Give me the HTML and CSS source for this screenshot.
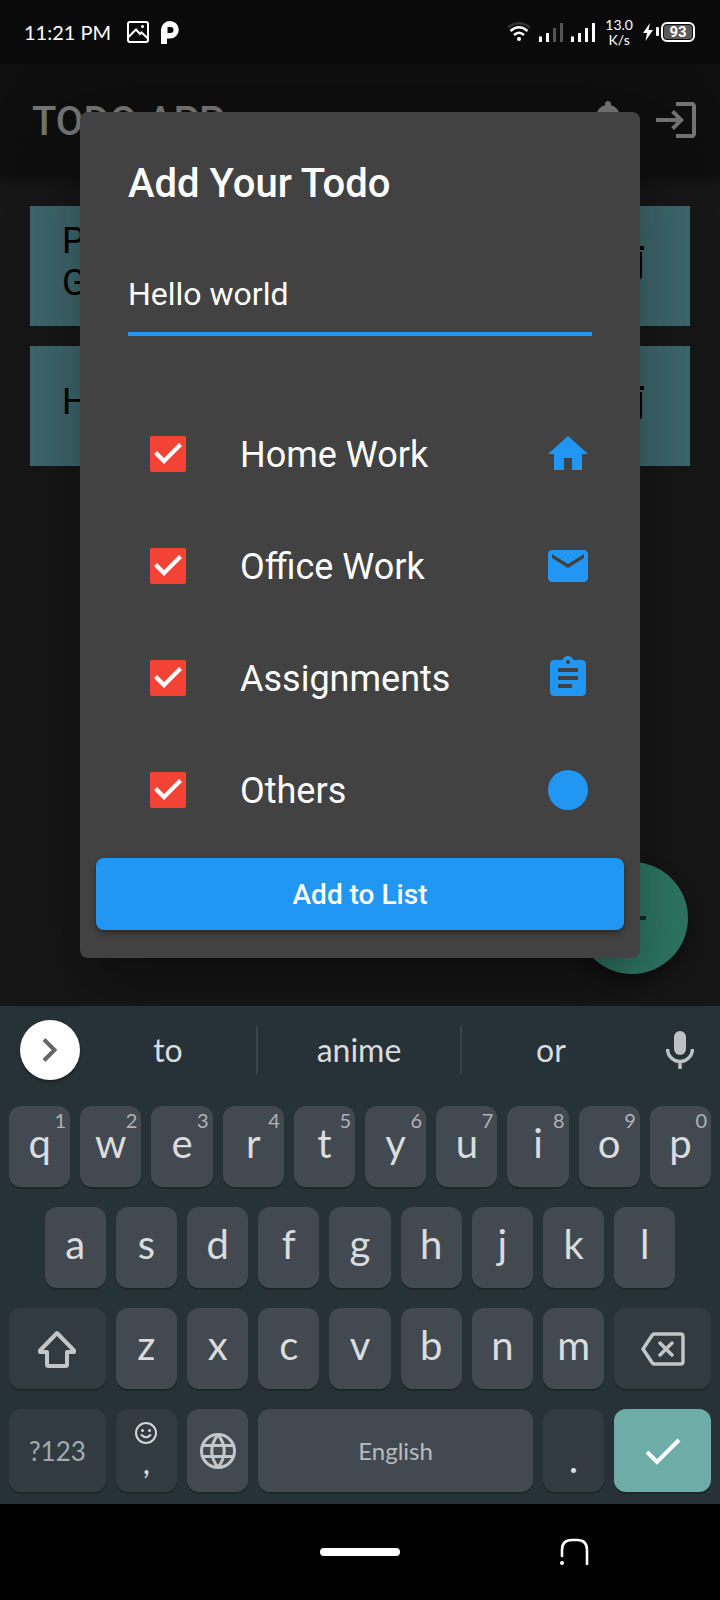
FILE: index.html
```html
<!DOCTYPE html>
<html lang="en">
<head>
<meta charset="utf-8">
<meta name="viewport" content="width=device-width, initial-scale=1">
<title>Todo App</title>
<link rel="stylesheet" href="styles.css">
</head>
<body>
<div class="phone">
  <header class="status">
    <span class="status-time">11:21 PM</span>
    <svg class="status-image" width="22" height="22" viewBox="0 0 22 22" fill="none" stroke="#fff" stroke-width="2"><rect x="1" y="1" width="20" height="20" rx="2"/><path d="M1 16.500L9 8.500L13 13L14.500 11.500L21 17.500"/><circle cx="15.500" cy="5.500" r="1.500" fill="#fff" stroke="none"/></svg>
    <svg class="status-brand" width="18" height="23" viewBox="0 0 18 23"><path fill="#fff" fill-rule="evenodd" d="M0 23V8.500A9 9 0 0 1 9 0A8.800 8.800 0 0 1 9 17.600H6V23ZM6.500 6V12H9.500A3 3 0 0 0 9.500 6Z"/></svg>
    <div class="status-right">
      <svg width="24" height="20" viewBox="0 0 24 20" fill="none" stroke="#fff" stroke-width="2.400"><path stroke="#333" d="M1 5.500Q12-3 23 5.500"/><path d="M3.500 9Q12 1.500 20.500 9M7 13Q12 8.500 17 13"/><circle cx="12" cy="17" r="2" fill="#fff" stroke="none"/></svg>
      <svg width="24" height="20" viewBox="0 0 24 20" fill="#fff"><path d="M0 14.500h3V20H0zM7 11h3v9H7z"/><path fill="#555" d="M14 6h3v14h-3zM21 1h3v19h-3z"/></svg>
      <svg width="24" height="20" viewBox="0 0 24 20" fill="#fff"><path d="M0 14.500h3V20H0zM7 11h3v9H7zM14 6h3v14h-3zM21 1h3v19h-3z"/></svg>
      <span class="status-rate">13.0<br>K/s</span>
      <span class="battery">
        <svg width="16" height="18" viewBox="0 0 16 18" fill="#fff"><path d="M7 0L0 10h4L2.500 18L10 7H5.500z"/><rect x="13" y="4" width="3" height="9" rx="1"/></svg>
        <span class="battery-level">93</span>
      </span>
    </div>
  </header>

  <section class="stage">
    <div class="app">
      <div class="app-bar">
        <h1 class="app-title">TODO APP</h1>
        <button class="icon-button" aria-label="Notifications"><svg width="48" height="48" viewBox="0 0 24 24" fill="currentColor"><path d="M12 22c1.100 0 2-.9 2-2h-4c0 1.100.89 2 2 2zm6-6v-5c0-3.070-1.640-5.640-4.500-6.320V4c0-.83-.67-1.500-1.500-1.500s-1.500.67-1.500 1.500v.68C7.630 5.360 6 7.920 6 11v5l-2 2v1h16v-1l-2-2z"/></svg></button>
        <button class="icon-button" aria-label="Log out"><svg width="48" height="48" viewBox="0 0 24 24" fill="currentColor"><path d="M11 7L9.600 8.400l2.600 2.600H2v2h10.200l-2.600 2.600L11 17l5-5-5-5zm9 12h-8v2h8c1.100 0 2-.9 2-2V5c0-1.100-.9-2-2-2h-8v2h8v14z"/></svg></button>
      </div>
      <div class="todos">
        <article class="todo"><p class="todo-text">P<br>G</p>
          <button class="todo-delete" aria-label="Delete"><svg width="48" height="48" viewBox="0 0 24 24" fill="currentColor"><path d="M6 19c0 1.100.9 2 2 2h8c1.100 0 2-.9 2-2V7H6v12zM8 9h8v10H8V9zm7.500-5l-1-1h-5l-1 1H5v2h14V4z"/></svg></button></article>
        <article class="todo"><p class="todo-text">H</p>
          <button class="todo-delete" aria-label="Delete"><svg width="48" height="48" viewBox="0 0 24 24" fill="currentColor"><path d="M6 19c0 1.100.9 2 2 2h8c1.100 0 2-.9 2-2V7H6v12zM8 9h8v10H8V9zm7.500-5l-1-1h-5l-1 1H5v2h14V4z"/></svg></button></article>
      </div>
      <button class="fab" aria-label="Add todo"><svg width="48" height="48" viewBox="0 0 24 24" fill="currentColor"><path d="M19 13h-6v6h-2v-6H5v-2h6V5h2v6h6v2z"/></svg></button>
    </div>

    <div class="overlay">
      <form class="dialog" role="dialog" aria-labelledby="dialog-title">
        <h2 class="dialog-title" id="dialog-title">Add Your Todo</h2>
        <input class="dialog-input" type="text" value="Hello world" aria-label="Todo">
        <div class="options">
          <div class="option"><input class="check" type="checkbox" id="c1" checked><label class="option-label" for="c1">Home Work</label>
            <svg class="option-icon" width="48" height="48" viewBox="0 0 24 24"><path d="M10 20v-6h4v6h5v-8h3L12 3 2 12h3v8z"/></svg></div>
          <div class="option"><input class="check" type="checkbox" id="c2" checked><label class="option-label" for="c2">Office Work</label>
            <svg class="option-icon" width="48" height="48" viewBox="0 0 24 24"><path d="M20 4H4c-1.100 0-1.990.9-1.990 2L2 18c0 1.100.9 2 2 2h16c1.100 0 2-.9 2-2V6c0-1.100-.9-2-2-2zm0 4l-8 5-8-5V6l8 5 8-5v2z"/></svg></div>
          <div class="option"><input class="check" type="checkbox" id="c3" checked><label class="option-label" for="c3">Assignments</label>
            <svg class="option-icon" width="48" height="48" viewBox="0 0 24 24"><path d="M19 3h-4.180C14.400 1.840 13.300 1 12 1c-1.300 0-2.400.84-2.820 2H5c-1.100 0-2 .9-2 2v14c0 1.100.9 2 2 2h14c1.100 0 2-.9 2-2V5c0-1.100-.9-2-2-2zm-7 0c.55 0 1 .45 1 1s-.45 1-1 1-1-.45-1-1 .45-1 1-1zm2 14H7v-2h7v2zm3-4H7v-2h10v2zm0-4H7V7h10v2z"/></svg></div>
          <div class="option"><input class="check" type="checkbox" id="c4" checked><label class="option-label" for="c4">Others</label>
            <svg class="option-icon" width="48" height="48" viewBox="0 0 24 24"><circle cx="12" cy="12" r="10"/></svg></div>
        </div>
        <button class="submit" type="button">Add to List</button>
      </form>
    </div>
  </section>

  <section class="keyboard" aria-label="Keyboard">
    <div class="suggestions">
      <button class="expand" aria-label="More"><svg width="16" height="24" viewBox="0 0 16 24" fill="none" stroke="#666" stroke-width="4"><path d="M2 1.500L12.500 12L2 22.500"/></svg></button>
      <button class="suggestion">to</button>
      <button class="suggestion">anime</button>
      <button class="suggestion">or</button>
      <button class="mic" aria-label="Voice input"><svg width="28" height="38" viewBox="0 0 28 38"><rect x="8" width="12" height="24" rx="6" fill="#bdc1c5"/><path d="M1.500 18a12.500 12.500 0 0 0 25 0M14 30v8" fill="none" stroke="#bdc1c5" stroke-width="3.500"/></svg></button>
    </div>
    <div class="keys">
      <button class="key key-letter">q<span class="hint">1</span></button><button class="key key-letter">w<span class="hint">2</span></button><button class="key key-letter">e<span class="hint">3</span></button><button class="key key-letter">r<span class="hint">4</span></button><button class="key key-letter">t<span class="hint">5</span></button><button class="key key-letter">y<span class="hint">6</span></button><button class="key key-letter">u<span class="hint">7</span></button><button class="key key-letter">i<span class="hint">8</span></button><button class="key key-letter">o<span class="hint">9</span></button><button class="key key-letter">p<span class="hint">0</span></button>
      <button class="key key-letter key-indent">a</button><button class="key key-letter">s</button><button class="key key-letter">d</button><button class="key key-letter">f</button><button class="key key-letter">g</button><button class="key key-letter">h</button><button class="key key-letter">j</button><button class="key key-letter">k</button><button class="key key-letter">l</button>
      <button class="key key-start key-wide key-dark" aria-label="Shift"><svg width="40" height="38" viewBox="0 0 40 38" fill="none" stroke="#c3c6c8" stroke-width="4" stroke-linejoin="round"><path d="M20 3L3 20.500V22H10V34.500Q10 36 11.500 36H28.500Q30 36 30 34.500V22H37V20.500Z"/></svg></button><button class="key key-letter">z</button><button class="key key-letter">x</button><button class="key key-letter">c</button><button class="key key-letter">v</button><button class="key key-letter">b</button><button class="key key-letter">n</button><button class="key key-letter">m</button>
      <button class="key key-wide key-dark" aria-label="Backspace"><svg width="44" height="34" viewBox="0 0 44 34" fill="none" stroke="#c3c6c8" stroke-width="3.500" stroke-linejoin="round" stroke-linecap="round"><path d="M13 2H39.500Q42 2 42 4.500V29.500Q42 32 39.500 32H13Q12 32 11 30.500L2 17L11 3.500Q12 2 13 2ZM19 11L31 23M31 11L19 23"/></svg></button>
      <button class="key key-wide key-dark key-mode">?123</button>
      <button class="key key-dark key-emoji"><svg width="22" height="22" viewBox="0 0 22 22" fill="none" stroke="#d3d5d7" stroke-width="2"><circle cx="11" cy="11" r="10"/><path d="M6 12.500Q11 18 16 12.500"/><circle cx="7.500" cy="8.500" r="1.500" fill="#d3d5d7" stroke="none"/><circle cx="14.500" cy="8.500" r="1.500" fill="#d3d5d7" stroke="none"/></svg><span class="comma">,</span></button>
      <button class="key" aria-label="Language"><svg width="36" height="36" viewBox="0 0 36 36" fill="none" stroke="#c3c6ca" stroke-width="3"><circle cx="18" cy="18" r="16.500"/><path d="M3 12.500H33M3 23.500H33M18 1.500Q5.500 18 18 34.500M18 1.500Q30.500 18 18 34.500"/></svg></button>
      <button class="key key-space">English</button>
      <button class="key key-dark key-dot">.</button>
      <button class="key key-wide key-enter" aria-label="Done"><svg width="36" height="28" viewBox="0 0 36 28" fill="none" stroke="#fff" stroke-width="4"><path d="M2 15L12 25L34 3"/></svg></button>
    </div>
  </section>

  <nav class="nav">
    <button class="home-pill" aria-label="Home"></button>
    <button class="nav-back" aria-label="Back"><svg width="30" height="30" viewBox="0 0 30 30" fill="none" stroke="#fff" stroke-width="2.600" stroke-linecap="round"><path d="M3 19V13Q3 3 13 3H18Q28 3 28 13V27"/><circle cx="3" cy="26" r="2" fill="#fff" stroke="none"/></svg></button>
  </nav>
</div>
</body>
</html>
```
FILE: styles.css
```css
* {
  box-sizing: border-box;
}

body {
  margin: 0;
  background: #000;
  font-family: Roboto, "Liberation Sans", sans-serif;
}

button {
  margin: 0;
  padding: 0;
  border: 0;
  background: none;
  color: inherit;
  font: inherit;
}

svg {
  display: block;
}

.phone {
  display: flex;
  flex-direction: column;
  min-height: 100vh;
}

/* Status bar */
.status {
  position: relative;
  z-index: 1;
  display: flex;
  align-items: center;
  height: 64px;
  padding: 0 25px 0 24px;
  background: #0a0a0a;
  color: #fff;
  font-family: Lato, sans-serif;
}

.status-time {
  font-size: 20px;
  line-height: 24px;
}

.status-image {
  margin-left: 16px;
}

.status-brand {
  margin-left: 12px;
}

.status-right {
  display: flex;
  align-items: center;
  gap: 8px;
  margin-left: auto;
}

.status-rate {
  margin: 0 2px;
  font-size: 14px;
  line-height: 15px;
  text-align: center;
}

.battery {
  display: flex;
  align-items: center;
  gap: 2px;
}

.battery-level {
  width: 34px;
  height: 20px;
  border: 2px solid #fff;
  border-radius: 6px;
  background: #5a5a5a;
  box-shadow: inset 0 0 0 1px #0a0a0a;
  font: bold 15px/16px Roboto, sans-serif;
  text-align: center;
}

/* Page behind the dialog */
.stage {
  position: relative;
  display: flex;
  flex: 1;
  background: #171717;
}

.app {
  flex: 1;
}

.app-bar {
  display: flex;
  align-items: center;
  gap: 20px;
  height: 112px;
  padding: 0 20px 0 32px;
  background: #0f0f0f;
  box-shadow: 0 2px 8px #0f0f0f;
  color: #757575;
}

.app-title {
  flex: 1;
  margin: 0;
  padding-top: 3px;
  font-size: 40px;
  font-weight: 500;
  line-height: 48px;
}

.todos {
  display: grid;
  gap: 20px;
  padding: 30px;
}

.todo {
  display: flex;
  align-items: center;
  justify-content: space-between;
  height: 120px;
  padding: 0 36px 8px 32px;
  background: #3e686d;
  color: #000;
}

.todo-text {
  margin: 0;
  font-size: 36px;
  line-height: 42px;
}

.fab {
  position: absolute;
  right: 32px;
  bottom: 32px;
  display: grid;
  place-items: center;
  width: 112px;
  height: 112px;
  border-radius: 50%;
  background: #2f7865;
  box-shadow: 0 8px 16px rgba(0, 0, 0, 0.4);
  color: #0c2b30;
}

/* Dialog */
.overlay {
  position: absolute;
  inset: 0;
  display: flex;
  align-items: center;
  padding: 0 80px;
  overflow: hidden;
}

.dialog {
  flex: 1;
  padding: 48px 16px 28px;
  border-radius: 8px;
  background: #424242;
  box-shadow: 0 22px 30px -14px rgba(0, 0, 0, 0.2), 0 48px 76px 6px rgba(0, 0, 0, 0.14), 0 18px 92px 16px rgba(0, 0, 0, 0.12);
  color: #fff;
}

.dialog-title {
  margin: 0 32px 49px;
  font-size: 40px;
  font-weight: 500;
  line-height: 48px;
}

.dialog-input {
  display: block;
  width: calc(100% - 64px);
  height: 79px;
  margin: 0 32px 62px;
  padding: 0 0 2px;
  border: 0;
  border-bottom: 4px solid #2196f3;
  border-radius: 0;
  outline: 0;
  background: none;
  color: inherit;
  font-family: inherit;
  font-size: 32px;
}

.option {
  display: flex;
  align-items: center;
  height: 112px;
  padding: 0 32px 0 54px;
}

.check {
  width: 36px;
  height: 36px;
  margin: 0 54px 0 0;
  border-radius: 2px;
  background: #f44336;
  appearance: none;
}

.check:checked::before {
  content: "";
  display: block;
  height: 100%;
  background: #fff;
  clip-path: polygon(4px 18px, 7px 15px, 14px 22px, 29px 7px, 32px 10px, 14px 28px);
}

.option-label {
  flex: 1;
  padding-top: 2px;
  font-size: 36px;
  line-height: 42px;
}

.option-icon {
  fill: #2196f3;
}

.submit {
  display: block;
  width: 100%;
  height: 72px;
  margin-top: 12px;
  border-radius: 8px;
  background: #2196f3;
  box-shadow: 0 3px 6px rgba(0, 0, 0, 0.4);
  font-size: 28px;
  font-weight: 500;
}

/* Keyboard */
.keyboard {
  padding: 14px 9px 12px;
  background: #263238;
  color: #dadcde;
  font-family: Lato, sans-serif;
}

.suggestions {
  display: grid;
  grid-template-columns: 60px 44fr 51fr 45fr 71px;
  align-items: center;
  padding-left: 11px;
  margin-bottom: 26px;
}

.expand {
  display: grid;
  place-items: center;
  width: 60px;
  height: 60px;
  border-radius: 50%;
  background: #fff;
  box-shadow: 0 2px 3px rgba(0, 0, 0, 0.3);
}

.suggestion {
  height: 48px;
  font-size: 32px;
  line-height: 48px;
}

.suggestion + .suggestion {
  border-left: 2px solid #3a454b;
}

.mic {
  display: grid;
  place-items: center;
  padding-left: 9px;
}

.keys {
  display: grid;
  grid-template-columns: repeat(20, 1fr);
  grid-template-rows: repeat(3, 81px) 83px;
  gap: 20px 10px;
}

.key {
  position: relative;
  display: grid;
  grid-column-end: span 2;
  place-items: center;
  place-content: center;
  min-width: 0;
  border-radius: 12px;
  background: #424950;
  box-shadow: 0 2px 0 #1d262b;
  font-size: 40px;
  line-height: 44px;
}

.key-letter {
  padding-bottom: 8px;
}

.key-indent {
  grid-column: 2 / span 2;
}

.key-wide {
  grid-column-end: span 3;
}

.key-start {
  grid-column: 1 / span 3;
}

.key-dark {
  background: #313b41;
}

.hint {
  position: absolute;
  top: 2px;
  right: 4px;
  color: #afb2b5;
  font-size: 20px;
  line-height: 24px;
}

.key-mode {
  color: #a5aaad;
  font-size: 26px;
}

.comma {
  line-height: 36px;
  font-size: 32px;
}

.key-space {
  grid-column-end: span 8;
  color: #b7bbbe;
  font-size: 24px;
}

.key-dot {
  align-content: end;
  padding-bottom: 12px;
}

.key-enter {
  background: #6eaca8;
}

/* Navigation bar */
.nav {
  display: grid;
  grid-template-columns: 1fr 80px 1fr;
  align-items: center;
  height: 96px;
  background: #000;
}

.home-pill {
  grid-column: 2;
  height: 8px;
  border-radius: 4px;
  background: #fff;
}

.nav-back {
  justify-self: center;
  padding-left: 28px;
}
```
